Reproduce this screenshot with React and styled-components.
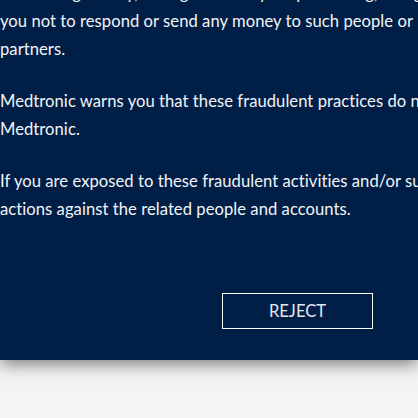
import React from "react"
import styled, { createGlobalStyle } from "styled-components"

const GlobalStyle = createGlobalStyle`
  html, body {
    margin: 0;
    padding: 0;
    background: #f4f4f4;
    overflow: hidden;
  }
  body {
    font-family: Lato, "Open Sans", sans-serif;
    -webkit-font-smoothing: antialiased;
  }
`

const Page = styled.div`
  width: 418px;
  height: 418px;
  overflow: hidden;
  background: #f4f4f4;
`

const Panel = styled.section`
  background: #001e46;
  color: #f2f4f7;
  height: 360px;
  box-shadow: 0 4px 16px rgba(0, 0, 0, 0.5);
  display: flex;
  flex-direction: column;
  overflow: hidden;
`

const Body = styled.div`
  margin-top: -21px;
  display: flex;
  flex-direction: column;
  gap: 24px;
`

const Paragraph = styled.p`
  margin: 0;
  font-size: 16.6px;
  line-height: 28px;
  letter-spacing: 0.05px;
  white-space: nowrap;
`

const Actions = styled.div`
  display: flex;
  justify-content: flex-end;
  padding: 70px 45px 0 0;
`

const Button = styled.button`
  width: 151px;
  height: 36px;
  background: transparent;
  border: 1px solid #ffffff;
  color: #e4e8ee;
  font-family: inherit;
  font-size: 16.6px;
  text-transform: uppercase;
  cursor: pointer;
`

const App = () => {
  return (
    <Page>
      <GlobalStyle />
      <Panel>
        <Body>
          <Paragraph>
            demanding money, asking for money for processing, charges, we urge
            <br />
            you not to respond or send any money to such people or
            <br />
            partners.
          </Paragraph>
          <Paragraph>
            Medtronic warns you that these fraudulent practices do not bind
            <br />
            Medtronic.
          </Paragraph>
          <Paragraph>
            If you are exposed to these fraudulent activities and/or suffer damages, you may take legal
            <br />
            actions against the related people and accounts.
          </Paragraph>
        </Body>
        <Actions>
          <Button>Reject</Button>
        </Actions>
      </Panel>
    </Page>
  )
}

export default App
